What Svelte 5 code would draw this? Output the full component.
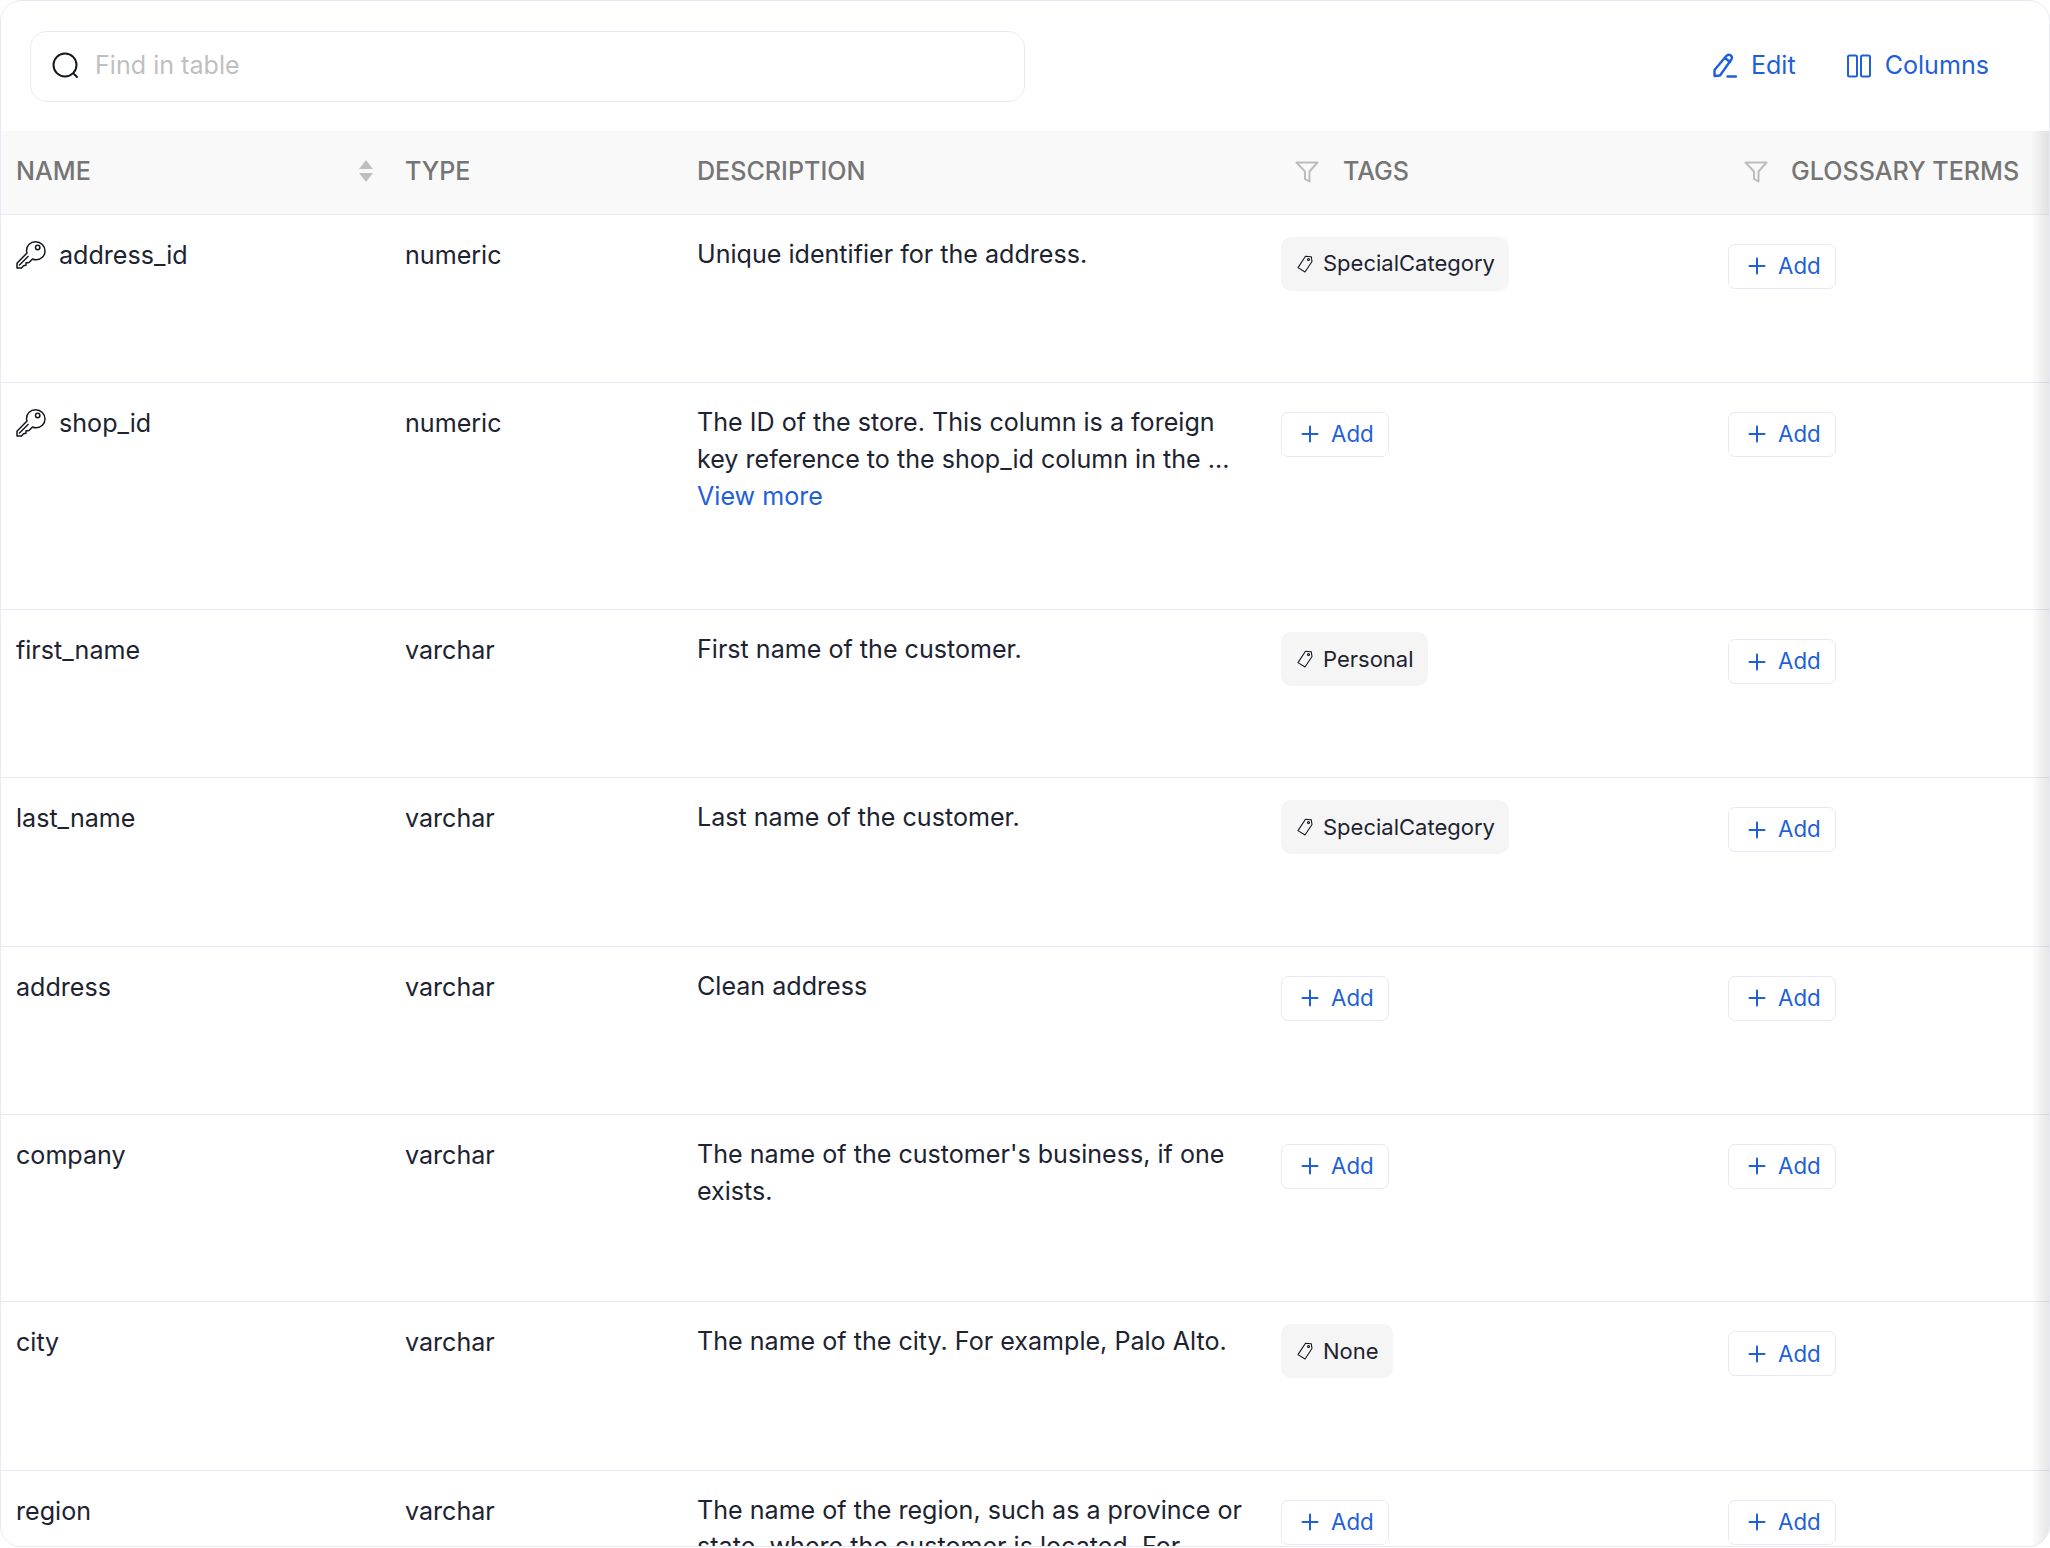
<script>
  // Schema table rows
  const rows = [
    { name: 'address_id', key: true, type: 'numeric', desc: 'Unique identifier for the address.', tag: 'SpecialCategory' },
    { name: 'shop_id', key: true, type: 'numeric', desc: 'The ID of the store. This column is a foreign key reference to the shop_id column in the ...', more: true },
    { name: 'first_name', type: 'varchar', desc: 'First name of the customer.', tag: 'Personal' },
    { name: 'last_name', type: 'varchar', desc: 'Last name of the customer.', tag: 'SpecialCategory' },
    { name: 'address', type: 'varchar', desc: 'Clean address' },
    { name: 'company', type: 'varchar', desc: "The name of the customer's business, if one exists." },
    { name: 'city', type: 'varchar', desc: 'The name of the city. For example, Palo Alto.', tag: 'None' },
    { name: 'region', type: 'varchar', desc: 'The name of the region, such as a province or state, where the customer is located. For example, California.' }
  ];
</script>

{#snippet funnel()}
  <svg class="funnel" viewBox="0 0 24 22" width="24" height="22" fill="none" stroke="#bdbdbd" stroke-width="2" stroke-linejoin="round">
    <path d="M1.5 1.5h21l-8 9v10l-4.500-2.500v-7.500z" />
  </svg>
{/snippet}

{#snippet addButton()}
  <button class="add">
    <svg viewBox="0 0 18 18" width="18" height="18" stroke="currentColor" stroke-width="2" stroke-linecap="round">
      <path d="M9 1.5v15M1.5 9h15" />
    </svg>
    Add
  </button>
{/snippet}

<div class="panel">
  <div class="toolbar">
    <div class="search">
      <svg viewBox="0 0 27 27" width="27" height="27" fill="none" stroke="#14171f" stroke-width="2">
        <circle cx="13" cy="13" r="11.5" />
        <path d="M22 22l3 3" stroke-linecap="round" />
      </svg>
      <span class="placeholder">Find in table</span>
    </div>
    <div class="actions">
      <button class="link">
        <svg viewBox="0 0 24 25" width="24" height="25" fill="none" stroke="currentColor" stroke-width="2.400" stroke-linejoin="round" stroke-linecap="round">
          <path d="M1.500 23v-6L13.500 2.800q2-1.800 4-.6 2.300 1.800 1 4L7 22.500z" />
          <path d="M12 5l5 4M14.500 23.500h8.500" />
        </svg>
        Edit
      </button>
      <button class="link">
        <svg viewBox="0 0 24 24" width="24" height="24" fill="none" stroke="currentColor" stroke-width="2">
          <rect x="1" y="1.500" width="9" height="21" rx="1.500" />
          <rect x="14" y="1.500" width="9" height="21" rx="1.500" />
        </svg>
        Columns
      </button>
    </div>
  </div>

  <div class="shadow"></div>

  <table>
    <colgroup>
      <col style="width: 388px" />
      <col style="width: 292px" />
      <col style="width: 584px" />
      <col style="width: 447px" />
      <col style="width: 337px" />
    </colgroup>
    <thead>
      <tr>
        <th class="first">
          <div class="th-name">
            NAME
            <svg viewBox="0 0 16 22" width="16" height="22" fill="#bfbfbf">
              <path d="M8 0l7 9H1zM8 22l-7-9h14z" />
            </svg>
          </div>
        </th>
        <th>TYPE</th>
        <th>DESCRIPTION</th>
        <th class="filter tags-head">{@render funnel()}TAGS</th>
        <th class="filter gloss-head">{@render funnel()}GLOSSARY TERMS</th>
      </tr>
    </thead>
    <tbody>
      {#each rows as row}
        <tr>
          <td class="first">
            <div class="name">
              {#if row.key}
                <svg viewBox="0 0 30 28" width="30" height="28" fill="none" stroke="#14171f" stroke-width="1.500" stroke-linejoin="round">
                  <path d="M10.500 9.500C10.500 4.500 14.500.8 19.500.8 25 .8 29 5 29 10c0 5-4 8.800-9 8.800-1.300 0-2.500-.3-3.500-.8L13 21.500l-3 .5v2.200l-2.500.5L5.500 27H1v-4.800L11 12c-.3-.8-.5-1.600-.5-2.500z" />
                  <circle cx="21.700" cy="6.500" r="2.200" />
                  <path d="M3 24.500l9.500-9.500" />
                </svg>
              {/if}
              {row.name}
            </div>
          </td>
          <td>{row.type}</td>
          <td class="desc">
            {row.desc}
            {#if row.more}<a href="#more">View more</a>{/if}
          </td>
          <td class="chips">
            {#if row.tag}
              <span class="tag">
                <svg viewBox="0 0 16 18" width="16" height="18" fill="none" stroke="#14171f" stroke-width="1.100" stroke-linejoin="round">
                  <path d="M8.500 1.200l5.800.6.700 4.700L8 17 1 12.600z" />
                  <circle cx="11.500" cy="4.500" r="1" />
                </svg>
                {row.tag}
              </span>
            {:else}
              <div class="add-wrap">{@render addButton()}</div>
            {/if}
          </td>
          <td class="chips"><div class="add-wrap">{@render addButton()}</div></td>
        </tr>
      {/each}
    </tbody>
  </table>
</div>

<style>
  :global(body) {
    margin: 0;
    background: #fff;
  }

  .panel {
    position: relative;
    box-sizing: border-box;
    height: 1547px;
    border: 1px solid #e9e9f6;
    border-radius: 21px;
    overflow: hidden;
    background: #fff;
    font-family: Inter, "Liberation Sans", sans-serif;
    font-size: 25.1px;
    line-height: 36.75px;
    color: #1d2330;
  }

  .toolbar {
    height: 130px;
    box-sizing: border-box;
    padding: 29px 60px 29px 29px;
    display: flex;
    align-items: center;
    justify-content: space-between;
  }

  .search {
    width: 995px;
    height: 71px;
    box-sizing: border-box;
    padding: 0 0 1px 21px;
    border: 1px solid #e9e9f6;
    border-radius: 17px;
    display: flex;
    align-items: center;
    gap: 16px;
  }

  .placeholder {
    color: #bfbfbf;
  }

  .actions {
    display: flex;
    align-items: center;
    gap: 51px;
    padding-bottom: 1px;
  }

  .link,
  .add {
    font: inherit;
    color: #1f5fd9;
    background: none;
    display: inline-flex;
    align-items: center;
    cursor: pointer;
  }

  .link {
    border: none;
    padding: 0;
    gap: 14px;
  }

  table {
    width: 2048px;
    table-layout: fixed;
    border-collapse: collapse;
  }

  th {
    height: 83px;
    padding: 0 16px 2px;
    box-sizing: border-box;
    background: #f9f9f9;
    border-bottom: 1px solid #e9e9f6;
    color: #757575;
    font-weight: 500;
    text-align: left;
    white-space: nowrap;
  }

  .first {
    padding-left: 15px;
  }

  .th-name {
    display: flex;
    align-items: center;
    justify-content: space-between;
    margin-right: -1px;
  }

  .filter {
    padding-left: 30px;
  }

  .funnel {
    margin-right: 24px;
    vertical-align: -3px;
  }

  .gloss-head {
    padding-left: 32px;
    padding-right: 0;
  }

  .gloss-head .funnel {
    margin-right: 23px;
  }

  td {
    height: 168.3px;
    box-sizing: border-box;
    padding: 22px 16px 0;
    vertical-align: top;
    border-bottom: 1px solid #e9e9f6;
  }

  .first.first {
    padding-left: 15px;
  }

  .name {
    display: flex;
    align-items: center;
    gap: 13px;
  }

  .desc {
    padding-top: 21px;
    padding-bottom: 92px;
  }

  .desc a {
    display: block;
    margin-top: 1px;
    padding-bottom: 2px;
    color: #1f5fd9;
    text-decoration: none;
  }

  .chips {
    padding-top: 0;
    padding-left: 16px;
  }

  .add-wrap {
    padding-top: 29px;
  }

  .tag {
    display: inline-flex;
    align-items: center;
    gap: 10px;
    height: 54px;
    box-sizing: border-box;
    margin-top: 22px;
    padding: 0 14px 0 16px;
    background: #f5f5f5;
    border-radius: 10px;
    font-size: 22px;
  }

  .add {
    height: 45px;
    box-sizing: border-box;
    padding: 0 14px 0 19px;
    gap: 12px;
    border: 1px solid #e9e9f6;
    border-radius: 7px;
    font-size: 22.3px;
  }

  .shadow {
    position: absolute;
    top: 130px;
    right: 0;
    bottom: 0;
    width: 18px;
    background: linear-gradient(to left, rgba(0, 0, 0, 0.1), rgba(0, 0, 0, 0));
    pointer-events: none;
    z-index: 1;
  }
</style>
